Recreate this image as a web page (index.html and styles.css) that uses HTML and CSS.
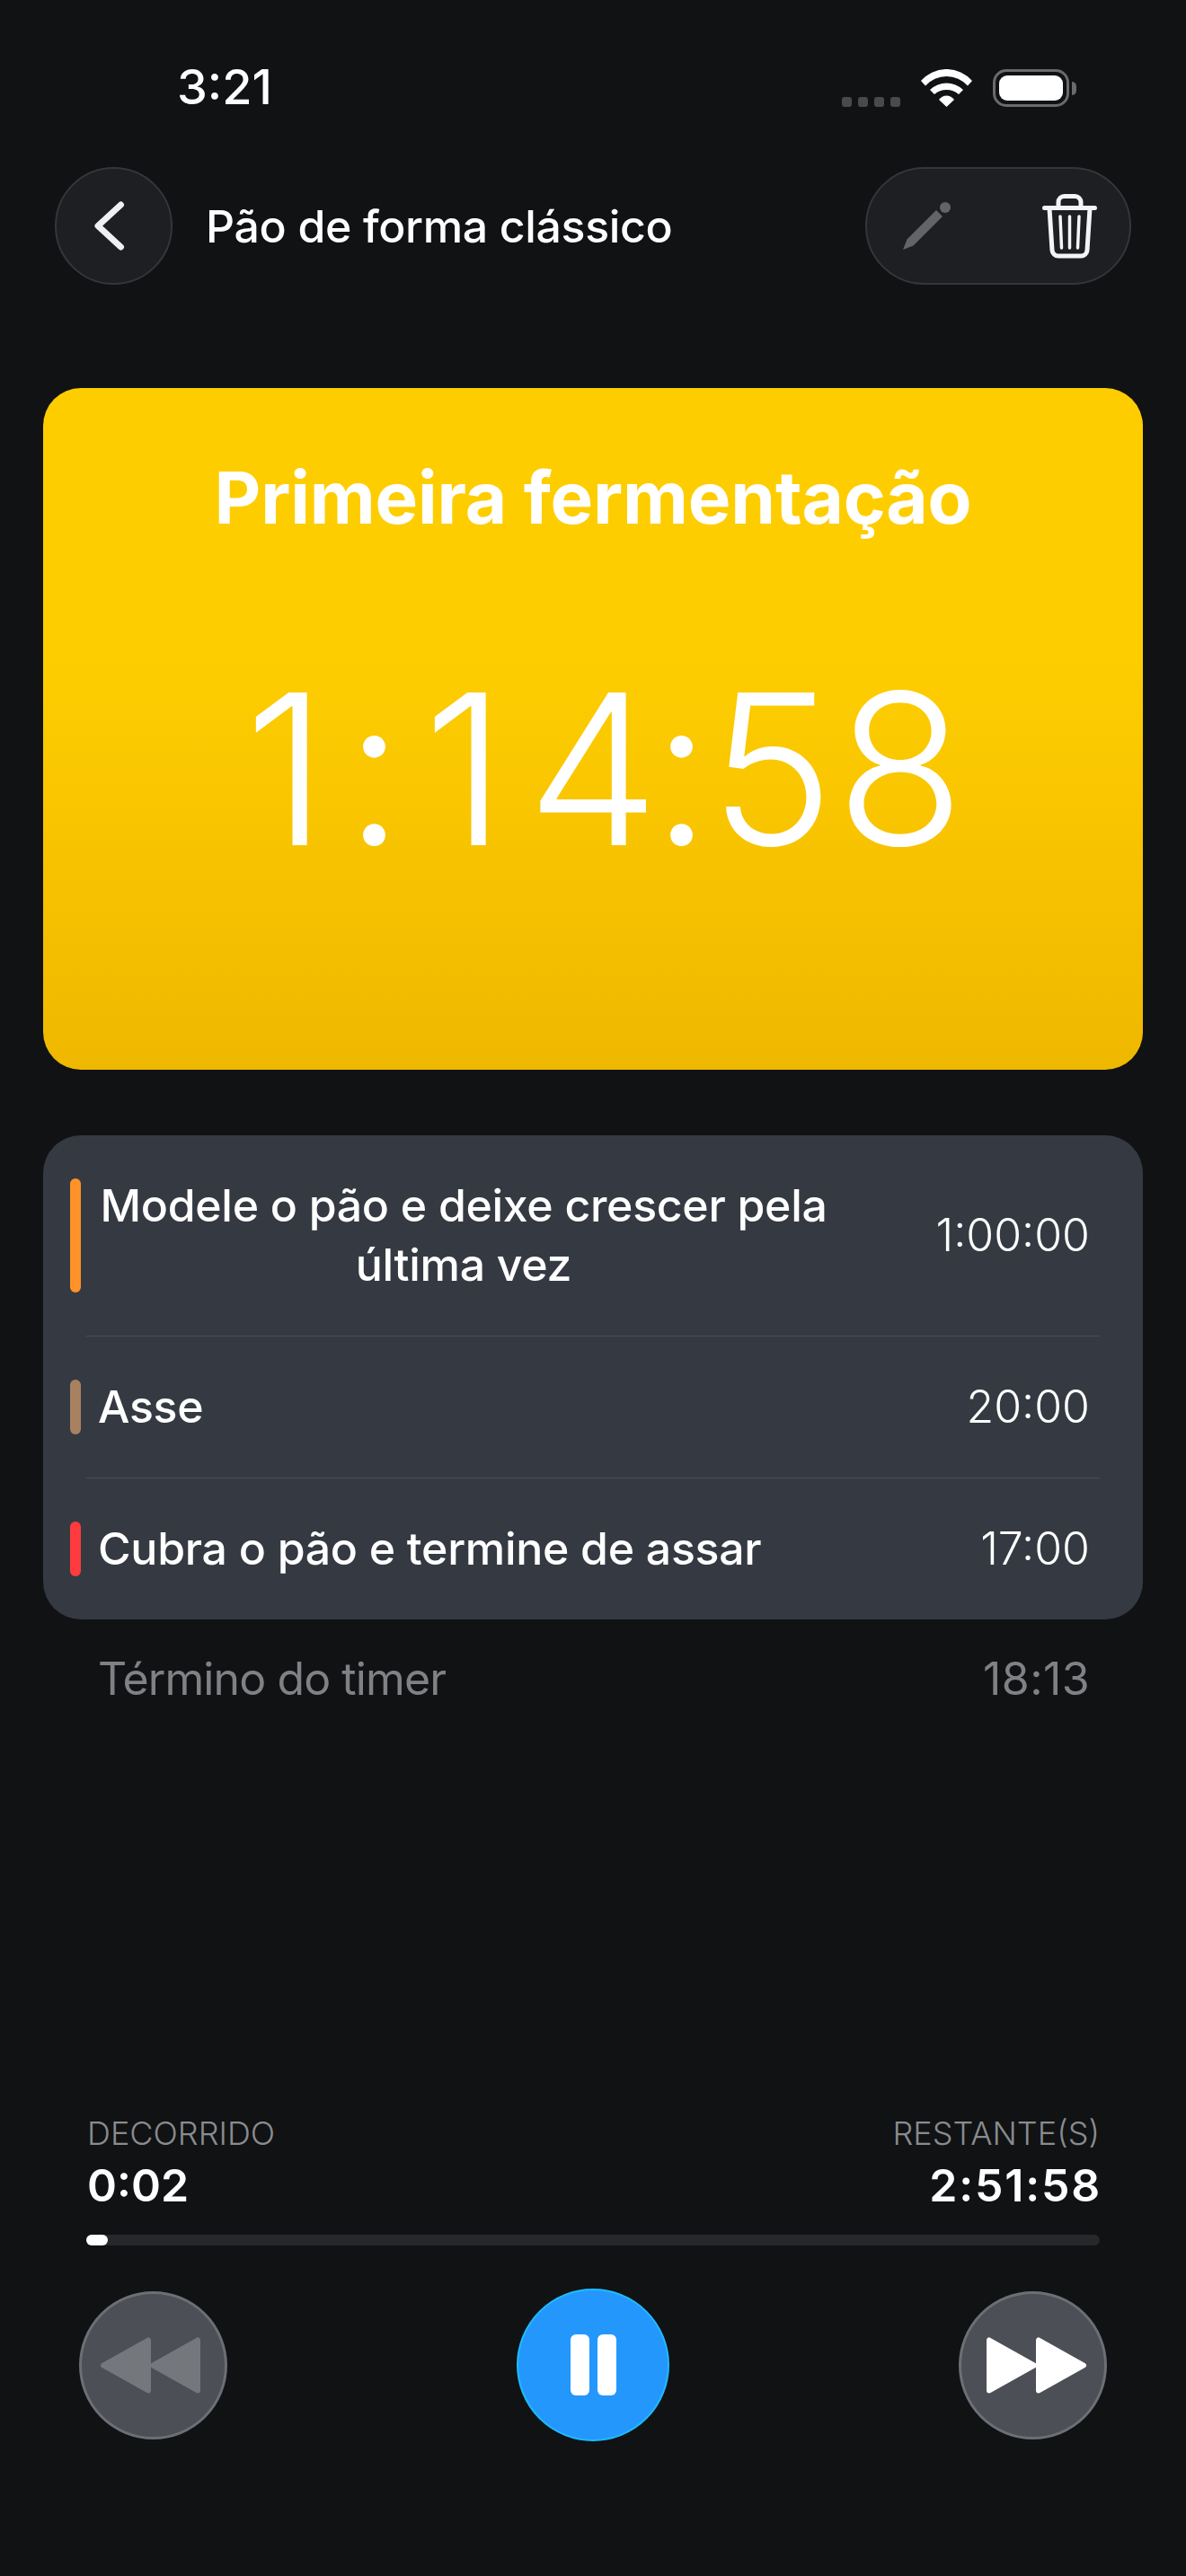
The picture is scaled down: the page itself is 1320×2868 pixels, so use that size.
FILE: index.html
```html
<!DOCTYPE html>
<html>
<head>
    <title>Pão de forma clássico</title>
    <link rel="stylesheet" href="styles.css">
</head>

<body>
  <div class="page">

    <div class="status">
      <span class="clock">3:21</span>
      <div class="status-icons">
        <div class="signal"><i></i><i></i><i></i><i></i></div>
        <svg class="wifi" width="57" height="42" viewBox="0 0 57 42">
          <path d="M0 13A37.7 37.7 0 0 1 57 13L52 18.5A31.5 31.5 0 0 0 5 18.5Z"/>
          <path d="M10 23A26.5 26.5 0 0 1 47 23L42 28A20.7 20.7 0 0 0 15 28Z"/>
          <path d="M20 34A10.3 10.3 0 0 1 37 34L28.5 42Z"/>
        </svg>
        <div class="battery"><div class="battery-level"></div></div>
        <div class="battery-cap"></div>
      </div>
    </div>

    <div class="header">
      <button class="back">
        <svg width="34" height="56" viewBox="0 0 34 56"><path d="M29.5 4L4 27.5L29.5 51"/></svg>
      </button>
      <h1 class="recipe">Pão de forma clássico</h1>
      <div class="actions">
        <svg width="53" height="53" viewBox="0 0 53 53" class="pencil">
          <path d="M0 53L4.5 41.5L37 9L44 16L11.5 48.5Z"/>
          <circle cx="47" cy="6" r="6"/>
        </svg>
        <svg width="61" height="72" viewBox="0 0 61 72" class="trash">
          <path d="M2.5 15.5H58.5"/>
          <path d="M18 14V9a6.5 6.5 0 0 1 6.5-6.500H36.500A6.500 6.500 0 0 1 43 9V14"/>
          <path d="M8 16L11 62.500A7 7 0 0 0 18 69H43A7 7 0 0 0 50 62.500L53 16"/>
          <path class="thin" d="M20 25L21.500 60M30.500 25V60M41 25L39.500 60"/>
        </svg>
      </div>
    </div>

    <div class="current">
      <h2 class="current-name">Primeira fermentação</h2>
      <div class="current-time"><span>1</span><b>:</b><span>1</span><span>4</span><b>:</b><span>5</span><span>8</span></div>
    </div>

    <div class="steps">
      <div class="step">
        <span class="bar orange"></span>
        <span class="step-name">Modele o pão e deixe crescer pela última vez</span>
        <span class="step-time">1:00:00</span>
      </div>
      <div class="sep"></div>
      <div class="step">
        <span class="bar brown"></span>
        <span class="step-name">Asse</span>
        <span class="step-time">20:00</span>
      </div>
      <div class="sep"></div>
      <div class="step">
        <span class="bar red"></span>
        <span class="step-name">Cubra o pão e termine de assar</span>
        <span class="step-time">17:00</span>
      </div>
    </div>

    <div class="finish">
      <span class="finish-label">Término do timer</span>
      <span class="finish-time">18:13</span>
    </div>

    <div class="player">
      <div class="times">
        <div>
          <div class="time-label">DECORRIDO</div>
          <div class="time-value">0:02</div>
        </div>
        <div class="right">
          <div class="time-label">RESTANTE(S)</div>
          <div class="time-value">2:51:58</div>
        </div>
      </div>
      <div class="track"><div class="thumb"></div></div>
    </div>

    <div class="controls">
      <button class="round">
        <svg width="112" height="63" viewBox="0 0 112 63" class="skip off">
          <path d="M4 31.500L54 3.500V59.500Z"/>
          <path d="M59 31.500L109 3.500V59.500Z"/>
        </svg>
      </button>
      <button class="pause"><i></i><i></i></button>
      <button class="round">
        <svg width="112" height="63" viewBox="0 0 112 63" class="skip on">
          <path d="M108 31.500L58 3.500V59.500Z"/>
          <path d="M53 31.500L3 3.500V59.500Z"/>
        </svg>
      </button>
    </div>

  </div>
</body>

</html>
```

FILE: styles.css
```css
* {
  box-sizing: border-box;
}

body {
  margin: 0;
  background: #101214;
  color: #fff;
  font-family: 'Inter', 'Liberation Sans', sans-serif;
}

button {
  padding: 0;
  cursor: pointer;
}

.page {
  height: 2868px;
  display: flex;
  flex-direction: column;
  padding-bottom: 150px;
}

/* status bar */
.status {
  display: flex;
  justify-content: space-between;
  align-items: center;
  height: 50px;
  margin-top: 72px;
  padding: 0 122px 0 197px;
}

.clock {
  font-size: 54px;
  font-weight: 500;
  line-height: 50px;
}

.status-icons {
  display: flex;
  align-items: flex-end;
  height: 42px;
  margin-top: 1px;
}

.signal {
  display: flex;
  gap: 7px;
  margin-right: 23px;
}

.signal i {
  width: 11px;
  height: 11px;
  border-radius: 3px;
  background: #4a4a4c;
}

.wifi {
  fill: #fff;
  margin-right: 23px;
}

.battery {
  width: 85px;
  height: 42px;
  padding: 4px;
  border: 3px solid #6b6b6d;
  border-radius: 15px;
}

.battery-level {
  height: 100%;
  background: #fff;
  border-radius: 9px;
}

.battery-cap {
  width: 5px;
  height: 15px;
  margin: 0 0 13px 3px;
  background: #6b6b6d;
  border-radius: 0 8px 8px 0;
}

/* header */
.header {
  display: flex;
  align-items: center;
  margin-top: 64px;
  padding: 0 61px;
}

.back {
  display: flex;
  justify-content: center;
  align-items: center;
  width: 131px;
  height: 131px;
  padding-right: 10px;
  background: #1e1f23;
  border: 2px solid #34363a;
  border-radius: 50%;
}

.back svg {
  fill: none;
  stroke: #f0f0f4;
  stroke-width: 7;
  stroke-linecap: round;
  stroke-linejoin: round;
}

.recipe {
  flex: 1;
  margin: 0 0 0 37px;
  font-size: 50px;
  font-weight: 500;
  line-height: 60px;
  letter-spacing: -0.35px;
}

.actions {
  display: flex;
  justify-content: space-between;
  align-items: center;
  width: 296px;
  height: 131px;
  padding: 0 36px 0 40px;
  background: #1e1f23;
  border: 2px solid #34363a;
  border-radius: 66px;
}

.pencil {
  fill: #636466;
}

.trash {
  fill: none;
  stroke: #f4f4f7;
  stroke-width: 5;
  stroke-linecap: round;
  stroke-linejoin: round;
}

.trash .thin {
  stroke-width: 3.5;
}

/* current step */
.current {
  height: 759px;
  margin: 115px 48px 0;
  padding-top: 72px;
  text-align: center;
  border-radius: 42px;
  background: linear-gradient(#fecd00 0%, #fecd00 40%, #efb800 100%);
}

.current-name {
  margin: 0;
  font-size: 80px;
  font-weight: 700;
  line-height: 100px;
  letter-spacing: -0.2px;
}

.current-time {
  display: flex;
  justify-content: center;
  margin-top: 112px;
  font-size: 234px;
  font-weight: 300;
  line-height: 280px;
}

.current-time span {
  width: 143px;
  margin: 0 5px 0 -5px;
  text-align: center;
  letter-spacing: -10px;
}

.current-time b {
  width: 56px;
  margin: 0 6px 0 -6px;
  font-weight: 300;
  text-align: left;
  letter-spacing: -12px;
}

/* step list */
.steps {
  margin: 73px 48px 0;
  background: #353a42;
  border-radius: 42px;
}

.step {
  display: flex;
  align-items: center;
  padding: 45px 59px 46px 30px;
  font-size: 50px;
  line-height: 66px;
}

.bar {
  flex: none;
  align-self: stretch;
  width: 12px;
  margin: 3px 19px 2px 0;
  border-radius: 6px;
}

.orange { background: #ff9228; }
.brown { background: #a88260; }
.red { background: #ff3b3f; }

.step-name {
  max-width: 814px;
  font-weight: 500;
  text-align: center;
  letter-spacing: -0.3px;
}

.step-time {
  margin-left: auto;
  font-weight: 300;
}

.sep {
  height: 1px;
  margin: 0 48px;
  background: #4a4f57;
}

.finish {
  display: flex;
  justify-content: space-between;
  margin: 33px 107px 0 109px;
  font-size: 50px;
  line-height: 66px;
  color: #808185;
}

.finish-label {
  letter-spacing: -0.9px;
}

.finish-time {
  letter-spacing: 0.4px;
}

/* player */
.player {
  margin-top: auto;
  padding: 0 96px;
}

.times {
  display: flex;
  justify-content: space-between;
  padding: 0 0 0 1px;
}

.right {
  text-align: right;
}

.time-label {
  font-size: 36px;
  font-weight: 300;
  line-height: 40px;
  color: #8a8b8f;
}

.time-value {
  margin-top: 8px;
  font-size: 50px;
  font-weight: 600;
  line-height: 60px;
}

.right .time-value {
  margin-right: -2px;
  letter-spacing: 1.8px;
}

.track {
  height: 12px;
  margin-top: 25px;
  background: #26282c;
  border-radius: 6px;
}

.thumb {
  width: 24px;
  height: 12px;
  background: #fff;
  border-radius: 6px;
}

.controls {
  display: flex;
  justify-content: space-between;
  align-items: center;
  margin-top: 48px;
  padding: 0 88px;
}

.round {
  display: flex;
  justify-content: center;
  align-items: center;
  width: 165px;
  height: 165px;
  background: #4c4f55;
  border: 3px solid #6c6f75;
  border-radius: 50%;
}

.skip {
  flex: none;
  fill: #fff;
  stroke: #fff;
  stroke-width: 6;
  stroke-linejoin: round;
}

.skip.off {
  margin-right: 8px;
  fill: #74777b;
  stroke: #74777b;
}

.skip.on {
  margin-left: 8px;
}

.pause {
  display: flex;
  justify-content: center;
  align-items: center;
  gap: 9px;
  width: 170px;
  height: 170px;
  background: #2497fd;
  border: 2px solid #1fbcff;
  border-radius: 50%;
}

.pause i {
  width: 21px;
  height: 68px;
  background: #fff;
  border-radius: 6px;
}
```
